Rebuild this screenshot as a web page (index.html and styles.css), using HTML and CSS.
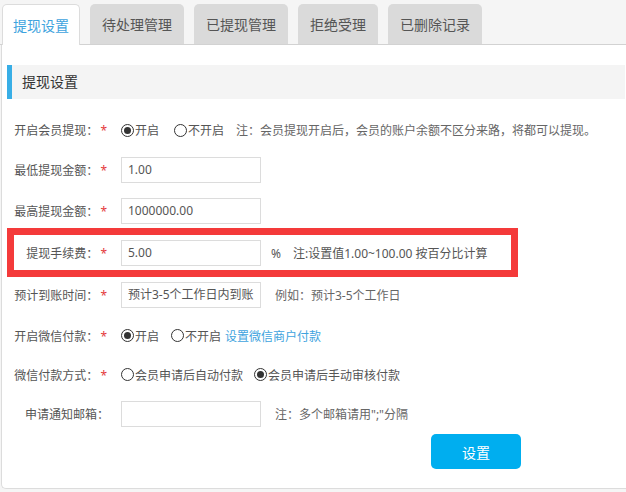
FILE: index.html
```html
<!DOCTYPE html>
<html lang="zh-CN">
<head>
<meta charset="utf-8">
<title>提现设置</title>
<link rel="stylesheet" href="styles.css">
</head>
<body>
<div class="tabs">
  <div class="tab active">提现设置</div>
  <div class="tab">待处理管理</div>
  <div class="tab">已提现管理</div>
  <div class="tab">拒绝受理</div>
  <div class="tab">已删除记录</div>
</div>
<div class="panel">
  <div class="section-head">提现设置</div>
  <div class="form">
    <div class="row">
      <div class="label">开启会员提现：<span class="star">*</span></div>
      <div class="field">
        <span class="opt gap15"><span class="radio checked"></span>开启</span>
        <span class="opt gap12"><span class="radio"></span>不开启</span>
        <span class="note">注：会员提现开启后，会员的账户余额不区分来路，将都可以提现。</span>
      </div>
    </div>
    <div class="row">
      <div class="label">最低提现金额：<span class="star">*</span></div>
      <div class="field"><div class="input">1.00</div></div>
    </div>
    <div class="row row-lg">
      <div class="label">最高提现金额：<span class="star">*</span></div>
      <div class="field"><div class="input">1000000.00</div></div>
    </div>
    <div class="row row-lg highlight">
      <div class="label">提现手续费：<span class="star">*</span></div>
      <div class="field">
        <div class="input">5.00</div>
        <span class="unit">%</span>
        <span class="note-after">注:设置值1.00~100.00 按百分比计算</span>
      </div>
    </div>
    <div class="row row-lg">
      <div class="label">预计到账时间：<span class="star">*</span></div>
      <div class="field">
        <div class="input">预计3-5个工作日内到账</div>
        <span class="note-input">例如：预计3-5个工作日</span>
      </div>
    </div>
    <div class="row row-sm">
      <div class="label">开启微信付款：<span class="star">*</span></div>
      <div class="field">
        <span class="opt gap12"><span class="radio checked"></span>开启</span>
        <span class="opt gap4"><span class="radio"></span>不开启</span>
        <a class="link">设置微信商户付款</a>
      </div>
    </div>
    <div class="row row-sm">
      <div class="label">微信付款方式：<span class="star">*</span></div>
      <div class="field">
        <span class="opt gap11"><span class="radio"></span>会员申请后自动付款</span>
        <span class="opt"><span class="radio checked"></span>会员申请后手动审核付款</span>
      </div>
    </div>
    <div class="row row-sm">
      <div class="label nostar">申请通知邮箱：</div>
      <div class="field">
        <div class="input"></div>
        <span class="note-input">注：多个邮箱请用";"分隔</span>
      </div>
    </div>
    <div class="actions">
      <button class="btn">设置</button>
    </div>
  </div>
</div>
</body>
</html>
```

FILE: styles.css
```css
*, *::before, *::after { box-sizing: border-box; }
html, body {
  margin: 0;
  padding: 0;
  background: #f5f5f5;
  font-family: "Noto Sans", "Noto Sans CJK SC", sans-serif;
  font-size: 12px;
  color: #555;
}
.tabs {
  display: flex;
  gap: 10px;
  padding: 4px 0 0 2px;
  height: 45px;
  border-bottom: 1px solid #d2d2d2;
}
.tab {
  height: 40px;
  padding: 1px 12px 0;
  line-height: 39px;
  font-size: 14px;
  color: #555;
  background: #dadada;
  border-radius: 5px 5px 0 0;
  white-space: nowrap;
}
.tab.active {
  height: 41px;
  padding: 1px 10px 0;
  background: #fff;
  color: #3ea3de;
  border: 1px solid #dcdcdc;
  border-bottom: none;
}
.panel {
  margin-left: 1px;
  height: 444px;
  background: #fff;
  border-left: 1px solid #dcdcdc;
  border-bottom: 1px solid #dcdcdc;
  border-bottom-left-radius: 5px;
  padding-top: 20px;
}
.section-head {
  margin: 0 1px 0 5px;
  height: 34px;
  line-height: 34px;
  background: #f4f4f4;
  border-left: 5px solid #38aee6;
  padding-left: 10px;
  font-size: 14px;
  color: #333;
}
.form {
  margin-top: 11px;
  padding-left: 10px;
}
.row {
  display: flex;
  align-items: center;
  height: 40px;
}
.row-lg { height: 42px; }
.row-sm { height: 39px; }
.label {
  width: 95px;
  flex: none;
  text-align: right;
  white-space: nowrap;
  color: #555;
}
.label.nostar {
  text-align: left;
  padding-left: 13px;
}
.star {
  color: #e4393c;
  margin-left: 2px;
}
.field {
  display: flex;
  align-items: center;
  margin-left: 14px;
  white-space: nowrap;
}
.input {
  width: 140px;
  height: 26px;
  line-height: 24px;
  border: 1px solid #dcdcdc;
  background: #fff;
  padding: 0 6px;
  overflow: hidden;
  white-space: nowrap;
  color: #555;
}
.opt {
  display: inline-flex;
  align-items: center;
}
.gap15 { margin-right: 15px; }
.gap12 { margin-right: 12px; }
.gap11 { margin-right: 11px; }
.gap4 { margin-right: 4px; }
.radio {
  width: 13px;
  height: 13px;
  border: 1px solid #333;
  border-radius: 50%;
  display: inline-flex;
  align-items: center;
  justify-content: center;
  margin-right: 1px;
  background: #fff;
}
.radio.checked::after {
  content: "";
  width: 7px;
  height: 7px;
  border-radius: 50%;
  background: #333;
}
.note { color: #666; }
.unit { margin-left: 10px; color: #555; }
.note-after { margin-left: 12px; color: #555; }
.note-input { margin-left: 14px; color: #666; }
.link { color: #3ea3de; text-decoration: none; }
.highlight { position: relative; }
.highlight::after {
  content: "";
  position: absolute;
  left: -5px;
  top: -4px;
  width: 511px;
  height: 49px;
  border: 7px solid #f43a3a;
  pointer-events: none;
}
.actions {
  padding-left: 419px;
  padding-top: 1px;
}
.btn {
  width: 90px;
  height: 35px;
  border: none;
  border-radius: 5px;
  background: #00aeef;
  color: #fff;
  font-family: "Noto Sans", "Noto Sans CJK SC", sans-serif;
  font-size: 14px;
  padding: 0;
}
```
